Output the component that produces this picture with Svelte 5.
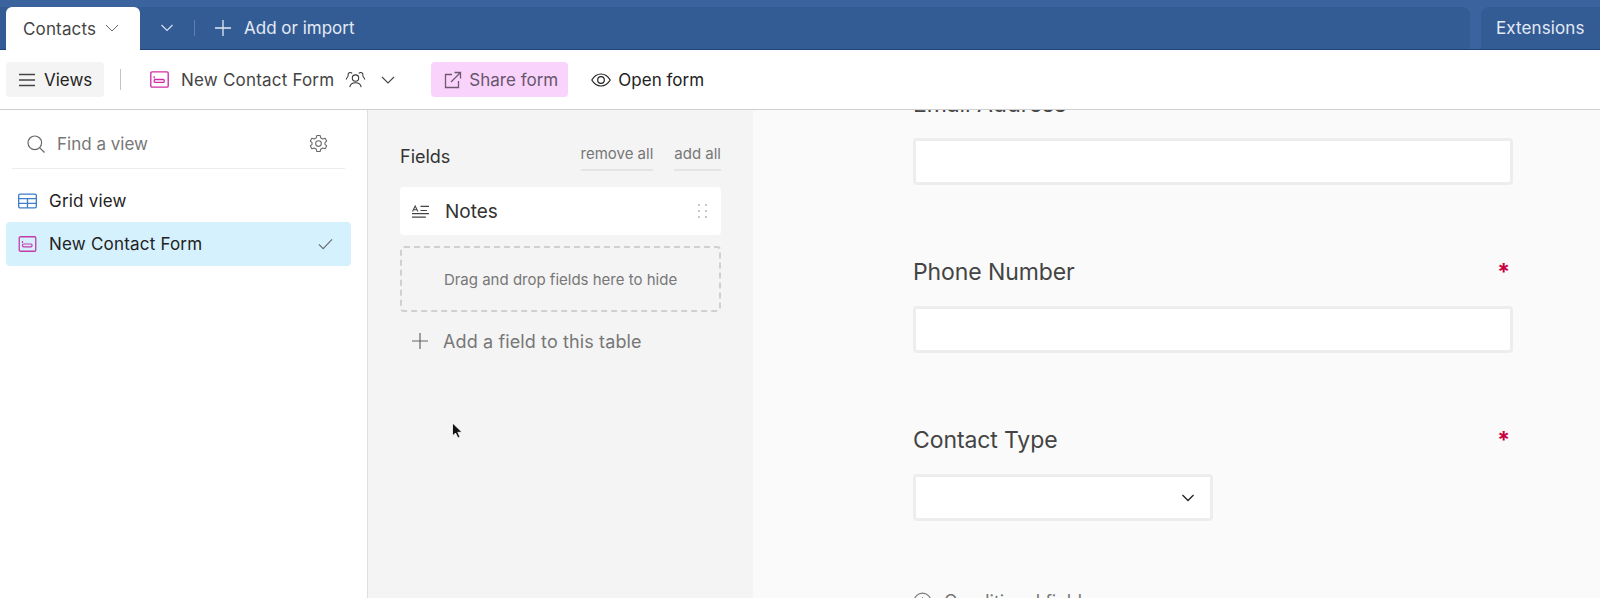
<script>
  const fields = [
    { label: 'Email Address', required: false },
    { label: 'Phone Number', required: true }
  ];
</script>

<div class="page">
  <header class="tabs">
    <div class="tab-main">
      <div class="tab">
        <span>Contacts</span>
        <svg class="chev" viewBox="0 0 16 16" width="16" height="16"><path d="M2 5 L8 11 L14 5" fill="none" stroke="#666" stroke-width="1" /></svg>
      </div>
      <svg class="more" viewBox="0 0 16 16" width="16" height="16"><path d="M2.500 5 L8 10.500 L13.500 5" fill="none" stroke="#d5e0f0" stroke-width="1.200" /></svg>
      <span class="tab-sep"></span>
      <svg class="plus" viewBox="0 0 18 18" width="18" height="18"><path d="M9 1 V17 M1 9 H17" fill="none" stroke="#dfe7f3" stroke-width="1.300" /></svg>
      <span class="add">Add or import</span>
    </div>
    <div class="ext">Extensions</div>
  </header>

  <div class="toolbar">
    <button class="views">
      <svg viewBox="0 0 16 16" width="16" height="16"><path d="M0 2.500 H16 M0 8 H16 M0 13.500 H16" fill="none" stroke="#444" stroke-width="1.300" /></svg>
      <span>Views</span>
    </button>
    <span class="bar-sep"></span>
    <svg class="form-ico" viewBox="0 0 18 16" width="19" height="17"><rect x="0.750" y="0.750" width="16.500" height="14.500" rx="1.200" fill="none" stroke="#d02fa5" stroke-width="1.300" /><path d="M4 5 V7" stroke="#d02fa5" stroke-width="1.200" /><rect x="4" y="8" width="9.500" height="2.800" rx="1" fill="none" stroke="#d02fa5" stroke-width="1.200" /></svg>
    <span class="view-name">New Contact Form</span>
    <svg class="people" viewBox="0 0 22 18" width="21" height="17">
      <g fill="none" stroke="#333" stroke-width="1.100">
        <circle cx="11" cy="7.500" r="3.400" />
        <path d="M5 17 C5.500 13.500 8 12.500 11 12.500 C14 12.500 16.500 13.500 17 17" />
        <path d="M7.500 2.500 C5.500 0.500 2.500 2 3.200 4.500 C3.600 6 2 6.500 1 9" />
        <path d="M14.500 2.500 C16.500 0.500 19.500 2 18.800 4.500 C18.400 6 20 6.500 21 9" />
      </g>
    </svg>
    <svg class="view-chev" viewBox="0 0 16 16" width="16" height="16"><path d="M2 5 L8 11 L14 5" fill="none" stroke="#444" stroke-width="1.100" /></svg>
    <button class="share">
      <svg viewBox="0 0 18 18" width="18" height="18"><g fill="none" stroke="#6d5a70" stroke-width="1.300"><path d="M8 3.500 H1.500 V16.500 H14.500 V10" /><path d="M7 11 L16 2 M10.500 1.500 H16.500 V7.500" /></g></svg>
      <span>Share form</span>
    </button>
    <button class="open">
      <svg viewBox="0 0 20 14" width="20" height="14"><g fill="none" stroke="#222" stroke-width="1.200"><path d="M0.800 7 C3.500 2.500 6.500 1 10 1 C13.500 1 16.500 2.500 19.200 7 C16.500 11.500 13.500 13 10 13 C6.500 13 3.500 11.500 0.800 7 Z" /><circle cx="10" cy="7" r="3.300" /></g></svg>
      <span>Open form</span>
    </button>
  </div>

  <main class="body">
    <aside class="sidebar">
      <div class="search">
        <svg viewBox="0 0 18 18" width="18" height="18"><g fill="none" stroke="#666" stroke-width="1.200"><circle cx="7.800" cy="7.800" r="6.800" /><path d="M12.800 12.800 L17.500 17.500" /></g></svg>
        <span class="find">Find a view</span>
        <svg class="gear" viewBox="0 0 20 20" width="19" height="19"><g fill="none" stroke="#666" stroke-width="1.100"><path d="M8.300 1.500 H11.700 L12.300 4 L14.500 5.200 L17 4.500 L18.600 7.400 L16.800 9.100 V10.900 L18.600 12.600 L17 15.500 L14.500 14.800 L12.300 16 L11.700 18.500 H8.300 L7.700 16 L5.500 14.800 L3 15.500 L1.400 12.600 L3.200 10.900 V9.100 L1.400 7.400 L3 4.500 L5.500 5.200 L7.700 4 Z" stroke-linejoin="round" /><circle cx="10" cy="10" r="3" /></g></svg>
      </div>
      <div class="row">
        <svg viewBox="0 0 20 16" width="19" height="16"><g fill="none" stroke="#3d7fc9" stroke-width="1.400"><rect x="0.700" y="0.700" width="18.600" height="14.600" rx="1.500" /><path d="M0.700 5.500 H19.300 M0.700 10.500 H19.300 M10 5.500 V15.300" /></g></svg>
        <span>Grid view</span>
      </div>
      <div class="row active">
        <svg viewBox="0 0 18 16" width="19" height="16"><rect x="0.750" y="0.750" width="16.500" height="14.500" rx="1.200" fill="none" stroke="#c43aa8" stroke-width="1.300" /><path d="M4 5 V7" stroke="#c43aa8" stroke-width="1.200" /><rect x="4" y="8" width="9.500" height="2.800" rx="1" fill="none" stroke="#c43aa8" stroke-width="1.200" /></svg>
        <span>New Contact Form</span>
        <svg class="check" viewBox="0 0 16 12" width="15" height="12"><path d="M1 6.500 L5.500 11 L15 1" fill="none" stroke="#666" stroke-width="1.100" /></svg>
      </div>
    </aside>

    <section class="panel">
      <div class="panel-head">
        <span class="panel-title">Fields</span>
        <span class="link first">remove all</span>
        <span class="link">add all</span>
      </div>
      <div class="card">
        <svg viewBox="0 0 16 12" width="17" height="13"><g fill="none" stroke="#444" stroke-width="1"><path d="M0 8 H16 M0 11.300 H13" /><path d="M0.500 6 L3 0.800 L5.500 6 M1.300 4.300 H4.700" /><path d="M8 1.200 H16 M8 5 H14" /></g></svg>
        <span class="card-name">Notes</span>
        <span class="grip"><i></i><i></i><i></i><i></i><i></i><i></i></span>
      </div>
      <div class="drop">Drag and drop fields here to hide</div>
      <div class="add-field">
        <svg viewBox="0 0 16 16" width="16" height="16"><path d="M8 0 V16 M0 8 H16" fill="none" stroke="#666" stroke-width="1.200" /></svg>
        <span>Add a field to this table</span>
      </div>
      <svg class="cursor" viewBox="0 0 12 18" width="12" height="18"><path d="M1.500 1 V14 L4.500 11 L7 16 L9 15 L6.800 10.300 H11 Z" fill="#111" stroke="#fff" stroke-width="0.800" /></svg>
    </section>

    <section class="form">
      <div class="col">
        {#each fields as f}
          <div class="field">
            <div class="label"><span>{f.label}</span>{#if f.required}<b>*</b>{/if}</div>
            <div class="input"></div>
          </div>
        {/each}
        <div class="field">
          <div class="label"><span>Contact Type</span><b>*</b></div>
          <div class="input select">
            <svg viewBox="0 0 14 10" width="14" height="10"><path d="M1.500 2 L7 7.500 L12.500 2" fill="none" stroke="#222" stroke-width="1.300" /></svg>
          </div>
        </div>
        <div class="cond">
          <svg viewBox="0 0 20 20" width="19" height="19"><g fill="none" stroke="#777" stroke-width="1.200"><circle cx="10" cy="10" r="8.800" /><path d="M10 9 V15 M10 5.500 V7" /></g></svg>
          <span>Conditional field</span>
        </div>
      </div>
    </section>
  </main>
</div>

<style>
  :global(body) {
    margin: 0;
    overflow: hidden;
  }
  .page {
    width: 1600px;
    height: 598px;
    display: flex;
    flex-direction: column;
    overflow: hidden;
    font-family: Inter, "Liberation Sans", sans-serif;
    font-weight: 400;
    background: #fff;
    color: #333;
  }
  svg {
    display: block;
    flex: none;
  }
  button {
    font: inherit;
    border: 0;
    display: flex;
    align-items: center;
    height: 35px;
    border-radius: 4px;
    padding: 0;
  }

  /* Blue tab bar */
  .tabs {
    height: 50px;
    box-sizing: border-box;
    padding-top: 7px;
    background: #3b649f;
    border-bottom: 1px solid #1f4478;
    display: flex;
    gap: 11px;
  }
  .tab-main {
    width: 1470px;
    display: flex;
    align-items: center;
    background: #345c94;
    border-radius: 0 8px 0 0;
    padding-left: 6px;
    box-sizing: border-box;
  }
  .tab {
    width: 134px;
    height: 43px;
    margin-bottom: -1px;
    align-self: flex-end;
    box-sizing: border-box;
    background: #fff;
    border-radius: 6px 6px 0 0;
    display: flex;
    align-items: center;
    padding: 1px 0 0 17px;
    gap: 8px;
    font-size: 17px;
    letter-spacing: 0.15px;
    color: #444;
  }
  .chev {
    margin-top: -2px;
  }
  .more {
    margin-left: 19px;
  }
  .tab-sep {
    width: 1px;
    height: 16px;
    background: #5d80b0;
    margin-left: 19px;
  }
  .plus {
    margin-left: 19px;
  }
  .add {
    margin-left: 12px;
    font-size: 17px;
    color: #e3eaf5;
  }
  .ext {
    flex: 1;
    background: #345c94;
    border-radius: 8px 0 0 0;
    display: flex;
    align-items: center;
    padding-left: 15px;
    font-size: 17px;
    letter-spacing: 0.1px;
    color: #e3eaf5;
  }

  /* Toolbar */
  .toolbar {
    height: 60px;
    box-sizing: border-box;
    display: flex;
    align-items: center;
    padding: 0 0 0 6px;
    border-bottom: 1px solid #cfcfcf;
    background: #fff;
    font-size: 17px;
    letter-spacing: 0.2px;
    position: relative;
    z-index: 2;
  }
  .views {
    width: 98px;
    background: #f4f4f4;
    color: #222;
    padding-left: 13px;
    gap: 9px;
  }
  .bar-sep {
    width: 1px;
    height: 21px;
    background: #c4c4c4;
    margin-left: 16px;
  }
  .form-ico {
    margin-left: 29px;
  }
  .view-name {
    margin-left: 12px;
    color: #444;
  }
  .people {
    margin-left: 11px;
  }
  .view-chev {
    margin-left: 14px;
  }
  .share {
    margin-left: 35px;
    width: 137px;
    background: #f9d3fb;
    color: #66566c;
    padding-left: 13px;
    gap: 7px;
  }
  .open {
    margin-left: 23px;
    background: none;
    color: #222;
    gap: 7px;
  }

  .body {
    flex: 1;
    min-height: 0;
    display: flex;
  }

  /* Left view list */
  .sidebar {
    width: 368px;
    box-sizing: border-box;
    border-right: 1px solid #dedede;
    padding: 0 16px 0 6px;
    background: #fff;
  }
  .search {
    height: 59px;
    margin: 0 6px 0 6px;
    box-sizing: border-box;
    padding: 9px 17px 0 15px;
    border-bottom: 1px solid #ececec;
    display: flex;
    align-items: center;
    font-size: 17px;
    color: #777;
  }
  .find {
    margin-left: 12px;
  }
  .gear {
    margin-left: auto;
  }
  .row {
    height: 44px;
    border-radius: 4px;
    display: flex;
    align-items: center;
    padding: 0 18px 0 12px;
    gap: 12px;
    font-size: 17px;
    letter-spacing: 0.2px;
    color: #222;
  }
  .row:nth-child(2) {
    margin-top: 12px;
    height: 41px;
    padding-bottom: 1px;
    box-sizing: border-box;
  }
  .active {
    background: #d5f1fe;
  }
  .check {
    margin-left: auto;
  }

  /* Fields panel */
  .panel {
    width: 385px;
    box-sizing: border-box;
    background: #f4f4f4;
    padding: 0 32px;
    position: relative;
  }
  .panel-head {
    height: 77px;
    display: flex;
    align-items: flex-start;
    padding-top: 35px;
    box-sizing: border-box;
  }
  .panel-title {
    font-size: 18px;
    color: #333;
    line-height: 24px;
    margin-right: auto;
  }
  .link {
    font-size: 15px;
    color: #777;
    line-height: 18px;
    padding-bottom: 6px;
    border-bottom: 2px solid #e4e4e4;
  }
  .first {
    margin-right: 21px;
  }
  .card {
    height: 48px;
    background: #fff;
    border-radius: 4px;
    display: flex;
    align-items: center;
    padding: 0 14px 0 12px;
    gap: 16px;
    color: #333;
  }
  .card-name {
    font-size: 19px;
  }
  .grip {
    margin-left: auto;
    display: grid;
    grid-template-columns: 2px 2px;
    gap: 4px 5px;
  }
  .grip i {
    width: 2px;
    height: 2px;
    background: #c8c8c8;
  }
  .drop {
    height: 66px;
    margin-top: 11px;
    box-sizing: border-box;
    border: 2px dashed #d0d0d0;
    border-radius: 4px;
    display: flex;
    align-items: center;
    justify-content: center;
    font-size: 15px;
    color: #777;
  }
  .add-field {
    margin-top: 14px;
    padding-left: 12px;
    height: 30px;
    display: flex;
    align-items: center;
    gap: 15px;
    font-size: 18px;
    letter-spacing: 0.12px;
    color: #777;
  }
  .cursor {
    position: absolute;
    left: 83px;
    top: 312px;
  }

  /* Form preview */
  .form {
    flex: 1;
    background: #fafafa;
    padding-left: 160px;
    overflow: hidden;
    position: relative;
  }
  .col {
    width: 600px;
    margin-top: -21px;
  }
  .field {
    height: 168px;
  }
  .label {
    height: 30px;
    margin-bottom: 19px;
    display: flex;
    justify-content: space-between;
    align-items: center;
    font-size: 23px;
    letter-spacing: -0.1px;
    color: #444;
  }
  .label b {
    color: #c9003c;
    font-size: 23px;
    font-weight: 700;
    margin-right: 3px;
  }
  .input {
    height: 47px;
    box-sizing: border-box;
    background: #fff;
    border: 3px solid #ededed;
    border-radius: 4px;
  }
  .select {
    width: 300px;
    display: flex;
    align-items: center;
    justify-content: flex-end;
    padding-right: 15px;
  }
  .cond {
    margin-top: -2px;
    display: flex;
    align-items: center;
    gap: 12px;
    font-size: 18px;
    color: #777;
  }
</style>
